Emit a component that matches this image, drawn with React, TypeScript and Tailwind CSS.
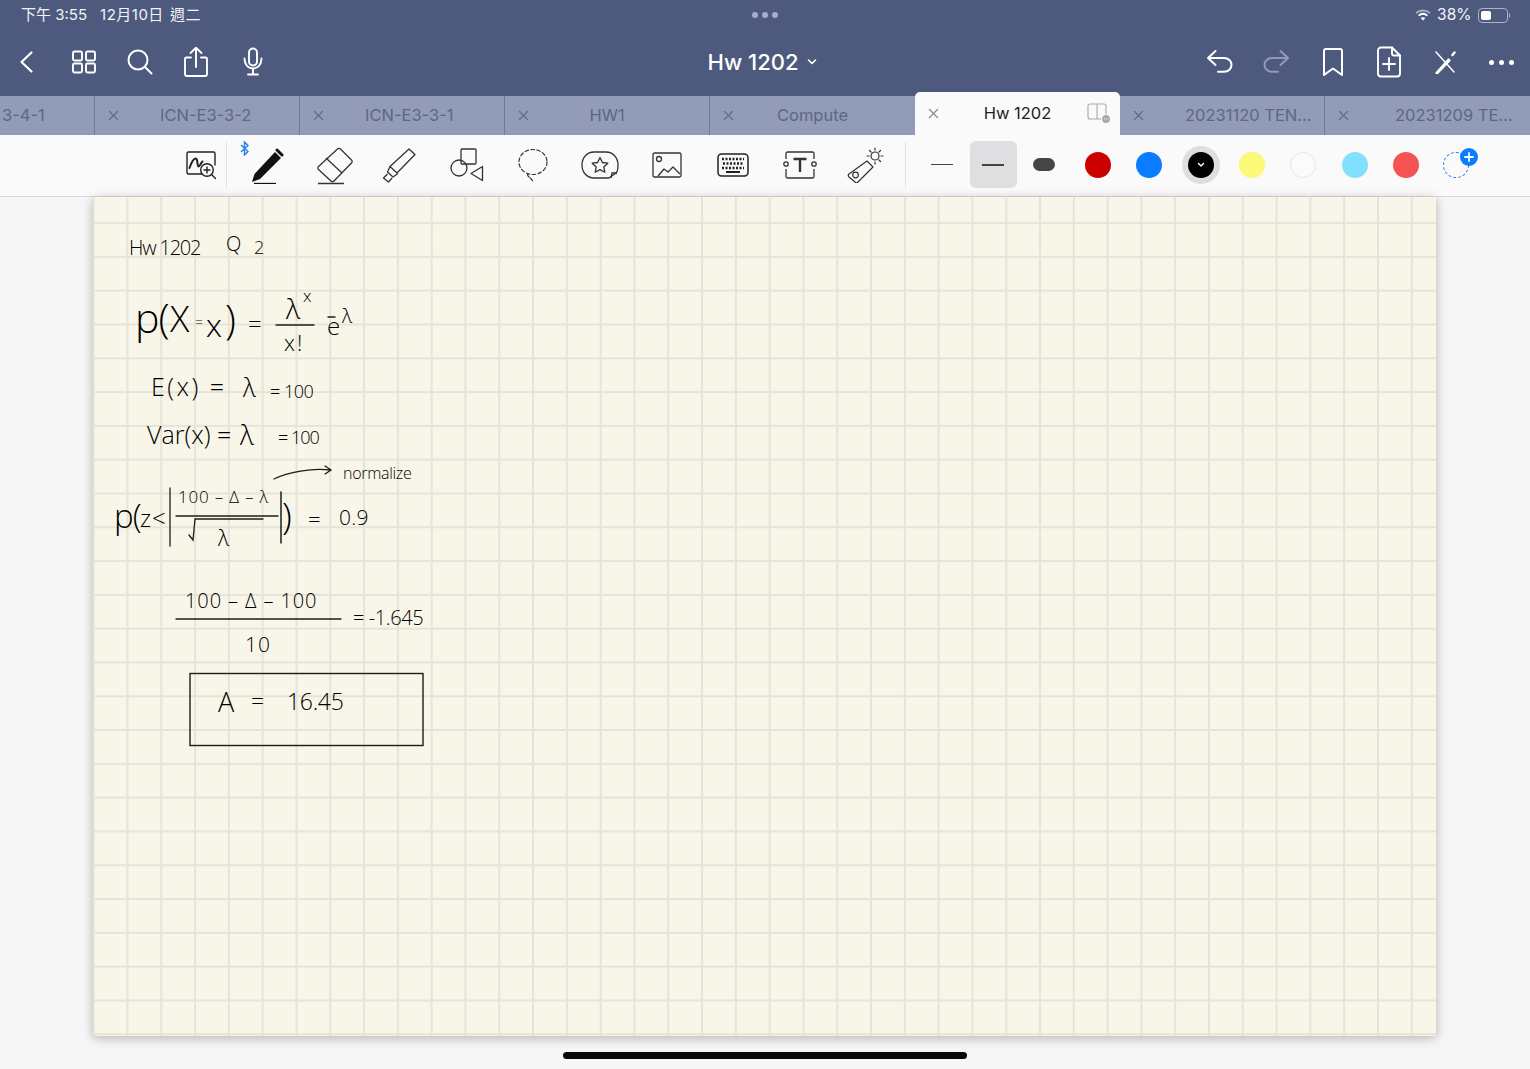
import React from "react";

const sans = "font-['Inter','Noto_Sans_CJK_TC',sans-serif]";
const ink = "absolute whitespace-nowrap leading-none text-[#000] font-['Open_Sans',sans-serif] font-light";

function Sv({ w = 32, h = 32, sw = 2, c = "currentColor", children }: { w?: number; h?: number; sw?: number; c?: string; children: React.ReactNode }) {
  return (
    <svg width={w} height={h} viewBox={`0 0 ${w} ${h}`} fill="none" stroke={c} strokeWidth={sw} strokeLinecap="round" strokeLinejoin="round">
      {children}
    </svg>
  );
}

function HeaderBtn({ children }: { children: React.ReactNode }) {
  return <div className="w-[56.4px] h-[40px] flex items-center justify-center shrink-0">{children}</div>;
}

function CloseX({ c = "#5f6b8a" }: { c?: string }) {
  return (
    <svg width="11" height="11" viewBox="0 0 11 11" stroke={c} strokeWidth="1.2" className="shrink-0">
      <path d="M1 1l9 9M10 1l-9 9" />
    </svg>
  );
}

function Tab({ label, long = false, last = false }: { label: string; long?: boolean; last?: boolean }) {
  return (
    <div className={`w-[205px] h-full flex items-center shrink-0 pl-[13px] ${last ? "" : "border-r border-[#6f7b9c]"}`}>
      <CloseX />
      {long ? (
        <span className={`text-[16.5px] text-[#5d6785] whitespace-nowrap ${last ? "ml-[46px]" : "ml-[41px]"}`}>{label}</span>
      ) : (
        <span className="flex-1 text-center text-[16.5px] text-[#5d6785] mr-[24px]">{label}</span>
      )}
    </div>
  );
}

function Tool({ children }: { children: React.ReactNode }) {
  return <div className="w-[66.6px] h-[50px] flex items-center justify-center shrink-0">{children}</div>;
}

function Dot({ color, ring = false, border = false }: { color: string; ring?: boolean; border?: boolean }) {
  return (
    <div className="w-[51.4px] h-[50px] flex items-center justify-center shrink-0">
      <div className={`${ring ? "w-[38px] h-[38px] bg-[#dedede]" : "w-[28px] h-[28px]"} rounded-full flex items-center justify-center`}>
        <div className={`w-[26px] h-[26px] rounded-full ${color} ${border ? "border border-[#e6e6e6]" : ""} flex items-center justify-center`}>
          {ring && (
            <svg width="8" height="6" viewBox="0 0 8 6" fill="none" stroke="#fff" strokeWidth="1.4" strokeLinecap="round" strokeLinejoin="round"><path d="M1.5 1.5L4 4l2.5-2.5" /></svg>
          )}
        </div>
      </div>
    </div>
  );
}

export default function App() {
  return (
    <div className={`w-[1530px] h-[1069px] bg-[#f6f6f6] relative overflow-hidden flex flex-col ${sans}`}>
      {/* Header */}
      <div className="h-[96px] bg-[#4d5a7e] text-white flex flex-col shrink-0">
        <div className="h-[30px] flex items-center justify-between pl-[21px] pr-[20px] relative text-[#f1f3f8]">
          <div className="flex items-center text-[15px] whitespace-nowrap">
            <span>下午 3:55</span>
            <span className="ml-[13px] tracking-[0.5px]">12月10日</span>
            <span className="ml-[6px] tracking-[0.5px]">週二</span>
          </div>
          <div className="absolute left-[752px] top-[12px] flex gap-[4px]">
            <div className="w-[6px] h-[6px] rounded-full bg-[#a5afcc]" />
            <div className="w-[6px] h-[6px] rounded-full bg-[#a5afcc]" />
            <div className="w-[6px] h-[6px] rounded-full bg-[#a5afcc]" />
          </div>
          <div className="flex items-center gap-[6px]">
            <svg width="16" height="12" viewBox="0 0 16 12" fill="none" strokeLinecap="butt">
              <path d="M1 4.2C5 .6 11 .6 15 4.2" stroke="#aab3cc" strokeWidth="1.8" />
              <path d="M3.6 6.6c2.600-2.200 6.200-2.200 8.800 0" stroke="#fff" strokeWidth="1.8" />
              <path d="M8 11.5l-2.300-2.600c1.300-1 3.300-1 4.600 0z" fill="#fff" />
            </svg>
            <span className="text-[15.5px]">38%</span>
            <div className="flex items-center gap-[1px]">
              <div className="w-[30px] h-[15px] rounded-[4px] border border-[#aab3cc] p-[2px] flex">
                <div className="w-[10px] h-full rounded-[2px] bg-white" />
              </div>
              <div className="w-[1.5px] h-[5px] bg-[#aab3cc] rounded-r" />
            </div>
          </div>
        </div>
        <div className="h-[66px] grid grid-cols-[1fr_auto_1fr] items-center pb-[2px]">
          <div className="flex ml-[-1px]">
            <HeaderBtn>
              <Sv w={18} h={24} sw={2.2} c="#fff"><path d="M13.5 2.5L3.5 12l10 9.500" /></Sv>
            </HeaderBtn>
            <HeaderBtn>
              <Sv w={26} h={26} sw={1.9} c="#fff">
                <rect x="2" y="2.500" width="9" height="9" rx="1.500" />
                <rect x="15" y="2.500" width="9" height="9" rx="1.500" />
                <rect x="2" y="14.500" width="9" height="9" rx="1.500" />
                <rect x="15" y="14.500" width="9" height="9" rx="1.500" />
              </Sv>
            </HeaderBtn>
            <HeaderBtn>
              <Sv w={28} h={28} sw={2} c="#fff"><circle cx="12" cy="12" r="9.500" /><path d="M19 19l6.500 6.500" /></Sv>
            </HeaderBtn>
            <HeaderBtn>
              <Sv w={26} h={32} sw={1.9} c="#fff">
                <path d="M8 11.500H3.500a1.500 1.500 0 0 0-1.500 1.500v15a2 2 0 0 0 2 2h18a2 2 0 0 0 2-2V13a1.500 1.500 0 0 0-1.500-1.500H18" />
                <path d="M13 21V2M7.500 7L13 1.800 18.500 7" />
              </Sv>
            </HeaderBtn>
            <HeaderBtn>
              <Sv w={22} h={30} sw={1.9} c="#fff">
                <rect x="7" y="1.500" width="8" height="17" rx="4" />
                <path d="M2.500 11.500c0 6 3.500 10 8.500 10s8.500-4 8.500-10M11 21.500v6M6 27.500h10" />
              </Sv>
            </HeaderBtn>
          </div>
          <div className="flex items-center text-[22px] font-medium text-white mr-[5px]">
            <span>Hw 1202</span>
            <svg width="10" height="8" viewBox="0 0 10 8" fill="none" stroke="#fff" strokeWidth="1.6" strokeLinecap="round" strokeLinejoin="round" className="ml-[9px]"><path d="M1.500 2L5 5.500 8.500 2" /></svg>
          </div>
          <div className="flex justify-end">
            <HeaderBtn>
              <Sv w={28} h={26} sw={2} c="#fff"><path d="M9.500 2L2 9l7.500 7M2.500 9H18c4.500 0 7.500 3 7.500 6.800s-3 7-7.500 7h-6" /></Sv>
            </HeaderBtn>
            <HeaderBtn>
              <Sv w={28} h={26} sw={2} c="#8f9ab8"><path d="M18.500 2L26 9l-7.500 7M25.500 9H10c-4.500 0-7.500 3-7.500 6.800s3 7 7.500 7h6" /></Sv>
            </HeaderBtn>
            <HeaderBtn>
              <Sv w={24} h={30} sw={2} c="#fff"><path d="M3 4a2 2 0 0 1 2-2h14a2 2 0 0 1 2 2v24l-9-6.500L3 28z" /></Sv>
            </HeaderBtn>
            <HeaderBtn>
              <Sv w={26} h={32} sw={1.9} c="#fff">
                <path d="M16 1.500H5a3 3 0 0 0-3 3v23a3 3 0 0 0 3 3h16a3 3 0 0 0 3-3V9.500z" />
                <path d="M16 1.500v6a2 2 0 0 0 2 2h6M13 12v12M7 18h12" />
              </Sv>
            </HeaderBtn>
            <HeaderBtn>
              <Sv w={24} h={26} sw={1.5} c="#fff">
                <path d="M3 3l18 20" />
                <path d="M3 24l12.500-14 1.500 1.500L4.500 24.500z" fill="#fff" />
                <path d="M19.500 6l2-2.500" strokeWidth="2.400" />
              </Sv>
            </HeaderBtn>
            <HeaderBtn>
              <div className="flex gap-[5px]">
                <div className="w-[5px] h-[5px] rounded-full bg-white" />
                <div className="w-[5px] h-[5px] rounded-full bg-white" />
                <div className="w-[5px] h-[5px] rounded-full bg-white" />
              </div>
            </HeaderBtn>
          </div>
        </div>
      </div>

      {/* Tabs */}
      <div className="h-[39px] bg-[#929cb8] flex shrink-0 relative">
        <div className="w-[95px] h-full flex items-center border-r border-[#6f7b9c] shrink-0 pl-[2px]">
          <span className="text-[16.5px] text-[#5d6785]">3-4-1</span>
        </div>
        <Tab label="ICN-E3-3-2" long />
        <Tab label="ICN-E3-3-1" long />
        <Tab label="HW1" />
        <div className="w-[205px] h-full flex items-center shrink-0 pl-[13px]">
          <CloseX />
          <span className="flex-1 text-center text-[16.5px] text-[#5d6785] mr-[24px]">Compute</span>
        </div>
        <div className="w-[205px] h-[43px] mt-[-4px] bg-[#fafafa] rounded-t-[5px] flex items-center pl-[13px] pr-[9px] shrink-0 relative">
          <CloseX c="#8a8a8a" />
          <span className="flex-1 text-center text-[16.5px] text-[#1e1e1e] mr-[15px]">Hw 1202</span>
          <svg width="24" height="22" viewBox="0 0 24 22" fill="none" stroke="#a9a9a9" strokeWidth="1.1" className="absolute right-[9px] top-[10px]">
            <rect x="1" y="2" width="18" height="15" rx="2" />
            <path d="M10 2v15" />
            <circle cx="19" cy="17" r="4.500" fill="#a9a9a9" stroke="#fafafa" />
            <path d="M16.800 17h4.400" stroke="#fff" strokeDasharray="1 1" />
          </svg>
        </div>
        <Tab label="20231120 TEN..." long />
        <Tab label="20231209 TE..." long last />
      </div>

      {/* Tool bar */}
      <div className="h-[62px] bg-[#fafafa] border-b border-[#dcdcdc] flex items-center shrink-0 pl-[176px] pb-[2px]">
        <div className="w-[50px] h-[50px] flex items-center justify-center shrink-0">
          <svg width="32" height="30" viewBox="0 0 32 30" fill="none" stroke="#222" strokeWidth="1.4" strokeLinecap="round">
            <path d="M17 24H3.500A1.500 1.500 0 0 1 2 22.500V3.500A1.500 1.500 0 0 1 3.500 2h25A1.500 1.500 0 0 1 30 3.500V15" />
            <path d="M4.500 18c1.500-4 3-9 6-9.500 2.500-.4 1.500 8 3 8 1.500 0 2-3 4-5" strokeWidth="2" />
            <circle cx="22" cy="20" r="6.300" />
            <path d="M19 20h6M22 17v6M26.500 24.500l4 4" />
          </svg>
        </div>
        <div className="w-px h-[46px] bg-[#e2e2e2] shrink-0" />
        <div className="flex ml-[6.700px] relative">
          <svg width="9" height="15" viewBox="0 0 9 15" fill="none" stroke="#2b84e8" strokeWidth="1.500" className="absolute left-[6px] top-[1px]"><path d="M1 4l7 6.500-3.500 3.500V1L8 4.500 1 11" /></svg>
          <Tool>
            <svg width="36" height="38" viewBox="0 0 36 38" fill="none">
              <path d="M26 6l6 6L11 33l-8 3 2.500-8z" fill="#111" />
              <path d="M28 4l5 5" stroke="#111" strokeWidth="3" strokeLinecap="round" />
              <path d="M5 37.500h22" stroke="#111" strokeWidth="1.300" />
            </svg>
          </Tool>
          <Tool>
            <svg width="40" height="40" viewBox="0 0 40 40" fill="none" stroke="#333" strokeWidth="1.300" strokeLinejoin="round">
              <path d="M23.500 4a2 2 0 0 1 3 0L37.500 15a2 2 0 0 1 0 3L20 36a2 2 0 0 1-3 0L4.500 24.500a2 2 0 0 1 0-3z" />
              <path d="M12 13l16 15" />
              <path d="M4 38.500h26" strokeWidth="1.500" />
            </svg>
          </Tool>
          <Tool>
            <svg width="36" height="36" viewBox="0 0 36 36" fill="none" stroke="#333" strokeWidth="1.300" strokeLinejoin="round">
              <path d="M27 2l6 5.500L15 26l-7-6.500z" />
              <path d="M8 19.500L5.500 25l5.500 5 5-3.500" />
              <path d="M5.500 27L1.500 31l5 4 3.500-4" />
            </svg>
          </Tool>
          <Tool>
            <svg width="34" height="34" viewBox="0 0 34 34" fill="none" stroke="#333" strokeWidth="1.300" strokeLinejoin="round">
              <rect x="11" y="1" width="15" height="15" rx="1" />
              <circle cx="9" cy="20" r="8" />
              <path d="M32.500 18.500v14L21 25.500z" />
            </svg>
          </Tool>
          <Tool>
            <svg width="32" height="36" viewBox="0 0 32 36" fill="none" stroke="#333" strokeWidth="1.200" strokeLinecap="round">
              <ellipse cx="16" cy="15" rx="14" ry="12.500" strokeDasharray="3.500 2.500" />
              <path d="M11 27c-2 2 4 4 5 8" strokeDasharray="3.500 1.500" />
            </svg>
          </Tool>
          <Tool>
            <svg width="38" height="30" viewBox="0 0 38 30" fill="none" stroke="#333" strokeWidth="1.300" strokeLinejoin="round">
              <path d="M28 28H13C6 28 1 22.500 1 15S6 2 13 2h12c7 0 12 5.500 12 13 0 4-1 7-2 8z" />
              <path d="M30 28l1-5h5" />
              <path d="M19 7.500l2.400 5 5.400.700-4 3.700 1 5.300-4.800-2.600-4.800 2.600 1-5.300-4-3.700 5.400-.700z" />
            </svg>
          </Tool>
          <Tool>
            <svg width="30" height="26" viewBox="0 0 30 26" fill="none" stroke="#333" strokeWidth="1.300" strokeLinejoin="round">
              <rect x="1" y="1" width="28" height="24" rx="1.500" />
              <circle cx="7" cy="7" r="2.500" />
              <path d="M6 24l6-7 4 3 5-5 7 7" />
            </svg>
          </Tool>
          <Tool>
            <svg width="32" height="24" viewBox="0 0 32 24" fill="none" stroke="#222" strokeLinejoin="round">
              <rect x="1" y="1" width="30" height="22" rx="3.500" strokeWidth="1.500" />
              <path d="M5 6h22" strokeWidth="2.500" strokeDasharray="2 1.500" />
              <path d="M6 10.500h20" strokeWidth="2.500" strokeDasharray="2 1.500" />
              <path d="M5 15h22" strokeWidth="2.500" strokeDasharray="2 1.500" />
              <path d="M9 19h14" strokeWidth="2" />
            </svg>
          </Tool>
          <Tool>
            <svg width="34" height="28" viewBox="0 0 34 28" fill="none" stroke="#333" strokeWidth="1.300">
              <path d="M3 8V2.500A1.500 1.500 0 0 1 4.500 1h25A1.500 1.500 0 0 1 31 2.500V8M3 18v7.500A1.500 1.500 0 0 0 4.500 27h25a1.500 1.500 0 0 0 1.500-1.500V18" />
              <circle cx="3" cy="13" r="2.200" />
              <circle cx="31" cy="13" r="2.200" />
              <path d="M10.500 8h13M17 8v13" strokeWidth="2.400" />
            </svg>
          </Tool>
          <Tool>
            <svg width="38" height="36" viewBox="0 0 38 36" fill="none" stroke="#333" strokeWidth="1.200" strokeLinecap="round" strokeLinejoin="round">
              <path d="M20 14l6 6-15 15c-1 1-2 1-3 0l-6-5c-1-1-1-2 0-3z" />
              <circle cx="8.500" cy="28" r="2.800" />
              <circle cx="28" cy="9" r="4" />
              <path d="M28 1v2M28 15v2M20 9h2M34 9h2M22.500 3.500l1.500 1.500M32 13l1.500 1.500M33.500 3.500L32 5" />
            </svg>
          </Tool>
        </div>
        <div className="w-px h-[46px] bg-[#e2e2e2] shrink-0 ml-[5px]" />
        <div className="flex items-center ml-[13px] gap-[4px]">
          <div className="w-[47px] h-[47px] flex items-center justify-center shrink-0">
            <div className="w-[22px] h-[1.500px] bg-[#444]" />
          </div>
          <div className="w-[47px] h-[47px] rounded-[6px] bg-[#dfdfe1] flex items-center justify-center shrink-0">
            <div className="w-[22px] h-[2px] bg-[#444]" />
          </div>
          <div className="w-[47px] h-[47px] flex items-center justify-center shrink-0">
            <div className="w-[22px] h-[13px] rounded-full bg-[#454545]" />
          </div>
        </div>
        <div className="flex items-center ml-[4.600px]">
          <Dot color="bg-[#cc0000]" />
          <Dot color="bg-[#0a7cff]" />
          <Dot color="bg-black" ring />
          <Dot color="bg-[#fbf977]" />
          <Dot color="bg-[#fbfbfb]" border />
          <Dot color="bg-[#82e2fd]" />
          <Dot color="bg-[#f55353]" />
        </div>
        <div className="relative w-[40px] h-[40px] ml-[4px] flex items-center justify-center shrink-0">
          <div className="w-[26px] h-[26px] rounded-full border-[1.500px] border-dashed border-[#1c7ee8]" />
          <div className="absolute left-[24px] top-[3px] w-[18px] h-[18px] rounded-full bg-[#0a7cff] flex items-center justify-center">
            <svg width="10" height="10" viewBox="0 0 10 10" stroke="#fff" strokeWidth="1.800" strokeLinecap="round"><path d="M5 1v8M1 5h8" /></svg>
          </div>
        </div>
      </div>

      {/* Page */}
      <div className="flex-1 pl-[93px] min-h-0">
        <div className="w-[1343px] h-[839px] relative bg-[#f8f6e9] shadow-[0_2px_10px_rgba(0,0,0,0.28)] bg-[linear-gradient(to_right,#e6e4d8_1.5px,transparent_1.5px),linear-gradient(to_bottom,#e6e4d8_1.5px,transparent_1.5px)] bg-[size:33.8px_33.8px] bg-[position:-0.300px_-8.700px]">
          {/* Handwritten notes */}
          <span className={`${ink} left-[36px] top-[41px] text-[20px] tracking-[-1.200px]`}>Hw 1202</span>
          <span className={`${ink} left-[133px] top-[37px] text-[20px]`}>Q</span>
          <span className={`${ink} left-[161px] top-[41px] text-[18px]`}>2</span>

          <span className={`${ink} left-[42px] top-[100px] text-[41px] tracking-[-1px]`}>p(</span>
          <span className={`${ink} left-[77px] top-[104px] text-[36px]`}>X</span>
          <span className={`${ink} left-[102px] top-[118px] text-[14px]`}>=</span>
          <span className={`${ink} left-[113px] top-[112px] text-[32px]`}>x</span>
          <span className={`${ink} left-[132px] top-[102px] text-[40px]`}>)</span>
          <span className={`${ink} left-[155px] top-[115px] text-[24px]`}>=</span>
          <span className={`${ink} left-[193px] top-[97px] text-[28px]`}>λ</span>
          <span className={`${ink} left-[210px] top-[90px] text-[17px]`}>x</span>
          <span className={`${ink} left-[191px] top-[134px] text-[22px] tracking-[2px]`}>x!</span>
          <span className={`${ink} left-[234px] top-[117px] text-[24px]`}>e</span>
          <span className={`${ink} left-[249px] top-[109px] text-[20px]`}>λ</span>

          <span className={`${ink} left-[58px] top-[177px] text-[25px] tracking-[2.500px]`}>E(x) =</span>
          <span className={`${ink} left-[150px] top-[178px] text-[25px]`}>λ</span>
          <span className={`${ink} left-[177px] top-[185px] text-[18px] tracking-[-0.500px]`}>= 100</span>

          <span className={`${ink} left-[54px] top-[225px] text-[25px]`}>Var(x) =</span>
          <span className={`${ink} left-[147px] top-[224px] text-[27px]`}>λ</span>
          <span className={`${ink} left-[185px] top-[231px] text-[18px] tracking-[-1px]`}>= 100</span>

          <span className={`${ink} left-[250px] top-[268px] text-[16px] tracking-[-0.300px]`}>normalize</span>

          <span className={`${ink} left-[21px] top-[302px] text-[33px] tracking-[-1px]`}>p(</span>
          <span className={`${ink} left-[47px] top-[309px] text-[24px] tracking-[1px]`}>z&lt;</span>
          <span className={`${ink} left-[85px] top-[291px] text-[17px] tracking-[0.800px]`}>100 – Δ – λ</span>
          <span className={`${ink} left-[125px] top-[329px] text-[22px]`}>λ</span>
          <span className={`${ink} left-[189px] top-[301px] text-[36px]`}>)</span>
          <span className={`${ink} left-[215px] top-[310px] text-[22px]`}>=</span>
          <span className={`${ink} left-[246px] top-[310px] text-[21px] tracking-[0.300px]`}>0.9</span>

          <span className={`${ink} left-[92px] top-[394px] text-[20px] tracking-[0.900px]`}>100 – Δ – 100</span>
          <span className={`${ink} left-[260px] top-[411px] text-[20px] tracking-[-0.400px]`}>= -1.645</span>
          <span className={`${ink} left-[152px] top-[437px] text-[21px] tracking-[1px]`}>10</span>

          <span className={`${ink} left-[125px] top-[491px] text-[27px]`}>A</span>
          <span className={`${ink} left-[158px] top-[493px] text-[23px]`}>=</span>
          <span className={`${ink} left-[194px] top-[493px] text-[23px] tracking-[-0.300px]`}>16.45</span>

          {/* Pen strokes that are plain lines */}
          <svg className="absolute left-0 top-0 pointer-events-none" width="400" height="600" viewBox="0 0 400 600" fill="none" stroke="#1c1c1c" strokeWidth="1.300" strokeLinecap="round">
            <path d="M183 128h38" />
            <path d="M235 120h7" />
            <path d="M181 282c14-7 38-11 56-9M232 269l6 4-6 4" />
            <path d="M77 291v58" />
            <path d="M83 319h102" />
            <path d="M96 338l4 5 2-21h68" />
            <path d="M188 295v51" strokeWidth="1.500" />
            <path d="M83 422h165" />
            <rect x="97" y="476.500" width="233" height="72" strokeWidth="1.400" />
          </svg>
        </div>
      </div>

      {/* Home indicator */}
      <div className="absolute left-[563px] top-[1052px] w-[404px] h-[7px] rounded-full bg-[#0a0a0a]" />
    </div>
  );
}
